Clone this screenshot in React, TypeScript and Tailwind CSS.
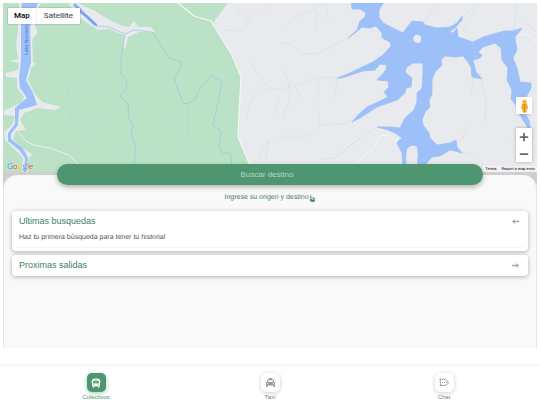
import type { ReactNode } from 'react';
import { FaBus, FaHandPointUp, FaTaxi } from 'react-icons/fa6';
import { Minus, Plus } from 'lucide-react';

const MapBackground = () => {
  return (
    <svg
      className="absolute inset-0 size-full"
      viewBox="3 3 534 169"
      preserveAspectRatio="xMidYMid slice"
      aria-hidden="true"
    >
      <rect x="0" y="0" width="540" height="180" fill="#e8eaed" />
      <path d="M0 0H230L213 23L232 55L241 77L239 113L238 137L249 163L254 175V180H0Z" fill="#bbe2c6" />

      {/* shores */}
      <g fill="#e8eaed">
        <path d="M19 0H42L36 14L35 26L38 32L32 40L33 62L36 64L31 68L28 80L35 94L42 102L61 107L56 110L38 108L24 113L20 120L26 130L16 131L13 139L24 149L32 154L28 160L28 172H22L23 158L14 149L5 140L4 132L12 125L15 116L4 115V111L14 106L21 103L24 97L17 88L17 78L6 77L5 73L18 70L19 63L10 61L18 59L16 45L18 30Z" />
        <path d="M66 0L80 4L95 11L106 18L120 25L129 27L134 21L138 27L151 27L155 32L139 32L128 37L125 50L123 44L124 35L109 29L98 30L78 17Z" />
      </g>

      {/* river and streams on the park side */}
      <path d="M22 0H40L34 11L30 27L31 62L26 80L33 93L37 105L30 107L19 110L18 125L11 134L11 139L23 148L28 158L26 172H24L25 158L19 150L8 141L8 133L15 124L15 108L22 102L27 98L20 88L19 78L21 60L21 23Z" fill="#9dc0f9" />
      <path d="M74 4L84 14L96 25" fill="none" stroke="#8ab4f3" strokeWidth="3" />
      <path d="M79 11L86 16L97 26" fill="none" stroke="#5f8fdf" strokeWidth="2" strokeDasharray="1 1" />
      <g fill="none" stroke="#9fc6e4" strokeWidth="0.8" strokeLinejoin="round">
        <path d="M96 26L109 27L125 34L134 30L152 32L158 40L168 57L181 62L181 67L174 77L176 84L183 103L188 104L195 99L202 85L207 82L211 75L222 81L219 97L213 125L221 131L219 147L223 153L230 153L232 165" />
        <path d="M125 35L121 59L121 74L127 80L126 89L120 96L128 104L129 118L133 125L131 135L136 146L134 165" />
      </g>
      <g fill="none" stroke="#a9cedb" strokeWidth="0.5" strokeDasharray="3 2">
        <path d="M98 35L83 63M90 80Q106 88 120 80M67 87L72 110L68 118M80 123L98 118M70 116L90 138M118 148L145 150M183 64L205 51Q210 40 207 27M170 33L188 21M187 105L188 135L194 150L190 160M219 102L234 126M182 104L171 127M228 70L225 78" />
      </g>
      <g fill="none" stroke="#f1f8f3">
        <path d="M178 3L194 16L211 21L232 55L241 77L239 113L238 137L249 163L254 175" strokeWidth="1.3" />
        <path d="M18 132L26 141L33 145L50 148L69 155L79 165" strokeWidth="0.8" />
      </g>

      {/* reservoir */}
      <path
        d="M351 0L352 9L360 9L366 13L365 17L360 21L357 30L348 38L355 33L362 27L370 28L376 26L382 33L382 38L390 42L391 46L383 55L373 62L360 68L350 73L337 78L342 78L363 71L375 70L380 64L387 65L386 70L377 80L388 81L389 87L384 92L388 97L378 102L367 107L358 115L352 122L360 118L377 107L397 100L405 93L406 88L411 87L412 78L405 72L407 67L413 63L423 63L423 72L422 88L417 93L417 102L414 110L405 118L400 128L390 127L377 127L388 130L395 133L401 137L397 143L402 153L403 172H424L426 164L432 157L440 156L450 150L455 151L462 153L457 147L456 140L450 143L437 145L430 138L429 133L423 125L422 120L425 112L430 107L429 100L432 94V80L435 72L442 65L441 60L445 56L455 57L463 56L468 62L471 67L472 77L482 79L476 72L473 60L480 58L482 55L478 52L483 47L495 43L501 48L502 60L508 68L507 80L512 90L511 99L515 104L520 115L528 128L530 127L529 120L524 112L525 99L531 88L531 83L520 82L517 68L513 58L517 50L515 37L522 28L513 31L505 31L497 33L483 37L473 42L458 37L457 28L453 33L449 32L455 28L462 20L462 16L457 23L450 27L437 28L425 25L423 22L412 21L408 26L403 33L393 28L383 23L379 17L379 10L385 0Z"
        fill="#9dc0f9"
        stroke="#9dc0f9"
        strokeWidth="0.8"
        strokeLinejoin="round"
      />
      <path d="M414 36Q418 33 421 37Q422 41 419 43Q414 43 413 39Z" fill="#e8eaed" />
      <path d="M407 149Q412 143 417 147L418 155L416 172H407L406 157Z" fill="#e8eaed" />
      <g fill="none" stroke="#cbd7ee" strokeWidth="0.6" strokeDasharray="3 1.5">
        <path d="M225 30L242 31L250 19L270 4M238 7Q240 17 250 19M285 26L300 15L325 4M316 10V30M326 4L328 20M280 43L290 44L304 54L318 54L348 38M250 60L258 75L270 88L284 90L290 85L300 85L314 78L338 78M247 118Q248 92 270 88M283 70L290 85L289 102L283 116M290 86L278 98L274 116M295 85L297 93L305 98M318 78V100M338 78L334 98M318 110L320 125L345 124L352 121M320 125L308 136L282 136L266 144L258 158M268 142L266 158M316 163L322 159L336 158L360 137" />
        <path d="M340 153L375 128M425 22L431 10L440 4M462 20L475 4M472 42L481 78L486 100L485 122M473 78L471 96M476 7L463 30M514 30L517 4M520 18L536 32M467 127L462 140M508 140L535 137M462 153L472 154L484 166" />
      </g>
      <path d="M355 164L372 150L380 136L388 135L396 141L401 138M521 33L531 36L536 43" fill="none" stroke="#f5f6f8" strokeWidth="1" />
      <text transform="translate(28 55) rotate(-90)" fill="#4a7fd0" fontSize="5" className="font-['Roboto',sans-serif]">
        Lake Norman
      </text>
    </svg>
  );
};

const Pegman = () => {
  return (
    <svg viewBox="0 0 10 16" className="h-[14px] w-[9px]" aria-hidden="true">
      <path d="M2 6Q5 4.500 8 6L9 11L7.500 11.500L7 15.500H3L2.500 11.500L1 11Z" fill="#f5a623" />
      <path d="M5 7V15.500" stroke="#c77b12" strokeWidth="0.7" />
      <circle cx="5" cy="3.200" r="2.600" fill="#f9b32f" />
      <path d="M3 5.500Q5 7 7 5.500" fill="none" stroke="#d28a1d" strokeWidth="0.8" />
    </svg>
  );
};

const ChatIcon = () => {
  return (
    <svg viewBox="0 0 20 18" className="h-[9px] w-[10px]" fill="none" stroke="#8b8b8b" strokeWidth="1.6" aria-hidden="true">
      <path d="M1.500 1.500L5 3Q10 1 15 4Q19 7 18 11Q16 15 10 15H2L3.500 12Q1 8 3 5Z" />
      <path d="M6 9H7.500M10 9H11.500M14 9H15.500" strokeWidth="2" />
    </svg>
  );
};

const ArrowIcon = ({ left = false }: { left?: boolean }) => {
  return (
    <svg
      viewBox="0 0 7 5"
      className={left ? 'h-[5px] w-[7px]' : 'h-[5px] w-[7px] rotate-180'}
      fill="#8fb5a2"
      aria-hidden="true"
    >
      <path d="M0 2.500L2.500 0V1.700H7V3.300H2.500V5Z" />
    </svg>
  );
};

interface PanelProps {
  title: string;
  open?: boolean;
  children?: ReactNode;
}

const Panel = ({ title, open = false, children }: PanelProps) => {
  return (
    <section className="rounded-[4px] bg-white px-[5px] shadow-[0_1px_4px_rgba(0,0,0,0.3)]">
      <button
        type="button"
        aria-expanded={open}
        className="flex h-[21px] w-full items-center justify-between pr-1 pl-[2px] text-[9px] text-[#417e5f]"
      >
        {title}
        <ArrowIcon left={open} />
      </button>
      {children}
    </section>
  );
};

interface TabProps {
  label: string;
  icon: ReactNode;
  active?: boolean;
}

const Tab = ({ label, icon, active = false }: TabProps) => {
  return (
    <button
      type="button"
      aria-current={active ? 'page' : undefined}
      className={`flex w-16 flex-col items-center gap-px text-[6px] leading-[8px] ${active ? 'text-[#4d966f]' : 'text-[#808080]'}`}
    >
      <span
        className={`flex size-[19px] items-center justify-center rounded-[5px] ${
          active
            ? 'bg-[#4d966f] text-white shadow-[0_1px_4px_rgba(77,150,111,0.5)]'
            : 'bg-white text-[#9a9a9a] shadow-[0_1px_4px_rgba(0,0,0,0.2)]'
        }`}
      >
        {icon}
      </span>
      {label}
    </button>
  );
};

const App = () => {
  return (
    <div className="flex min-h-screen flex-col bg-white font-['Liberation_Sans',Arial,sans-serif] [text-rendering:geometricPrecision]">
      <main className="mx-[3px] mt-[3px] bg-[#cfcfcf]">
        <div className="relative h-[169px] overflow-hidden font-['Roboto',sans-serif]">
          <MapBackground />
          <div className="absolute top-[5px] left-[5px] flex h-4 bg-white text-[8px] shadow-[0_0_2px_rgba(0,0,0,0.3)]">
            <button type="button" className="border-r border-gray-100 px-[6px] font-medium text-black">
              Map
            </button>
            <button type="button" className="px-[7px] font-medium text-[#565656]">
              Satellite
            </button>
          </div>
          <button
            type="button"
            aria-label="Street View"
            className="absolute top-[94px] right-[5px] flex h-[17px] w-4 items-center justify-center bg-white shadow-sm"
          >
            <Pegman />
          </button>
          <div className="absolute top-[125px] right-[5px] flex w-4 flex-col bg-white text-[#666666] shadow-[0_0_3px_rgba(0,0,0,0.3)]">
            <button type="button" aria-label="Zoom in" className="flex h-[17px] items-center justify-center">
              <Plus size={12} strokeWidth={3.5} />
            </button>
            <button type="button" aria-label="Zoom out" className="flex h-[17px] items-center justify-center">
              <Minus size={12} strokeWidth={3.5} />
            </button>
          </div>
          <div className="absolute bottom-0 left-1 font-['Open_Sans',sans-serif] text-[8px] leading-[11px] font-medium [text-shadow:0_0_1px_white]">
            <span className="text-[#4285f4]">G</span>
            <span className="text-[#ea4335]">o</span>
            <span className="text-[#fbbc05]">o</span>
            <span className="text-[#4285f4]">g</span>
            <span className="text-[#34a853]">l</span>
            <span className="text-[#ea4335]">e</span>
          </div>
          <div className="absolute right-0 bottom-0 flex gap-[5px] bg-[#f1f2f4] px-[2px] text-[4px] leading-[6px] text-black">
            <a href="#terms">Terms</a>
            <a href="#report">Report a map error</a>
          </div>
        </div>

        <div className="mt-[3px] flex min-h-[173px] flex-col rounded-t-[14px] border-x border-[#e6e6e6] bg-[#f9f9f9]">
          <button
            type="button"
            className="relative -mt-[11px] h-[21px] w-4/5 self-center rounded-full bg-[#4d966f] pr-[6px] text-[8px] text-[#b5dac5] shadow-[0_2px_5px_rgba(0,0,0,0.3)]"
          >
            Buscar destino
          </button>
          <p className="mt-2 flex items-center justify-center text-[7px] leading-[10px] text-[#417e5f]">
            Ingrese su origen y destino
            <FaHandPointUp size={7} />
          </p>
          <div className="mx-2 mt-2 flex flex-col gap-1">
            <Panel title="Ultimas busquedas" open>
              <p className="mb-[3px] border-b border-gray-100 pt-px pb-[5px] pl-[2px] text-[7px] leading-[9px] text-[#555555]">
                Haz tu primera búsqueda para tener tu historial
              </p>
            </Panel>
            <Panel title="Proximas salidas" />
          </div>
        </div>
      </main>

      <nav className="mt-auto flex h-10 items-start justify-around border-t border-gray-100 px-[9px] pt-[7px] shadow-[0_-1px_2px_rgba(0,0,0,0.04)]">
        <Tab label="Colectivos" icon={<FaBus size={10} />} active />
        <Tab label="Taxi" icon={<FaTaxi size={9} />} />
        <Tab label="Chat" icon={<ChatIcon />} />
      </nav>
    </div>
  );
};

export default App;
